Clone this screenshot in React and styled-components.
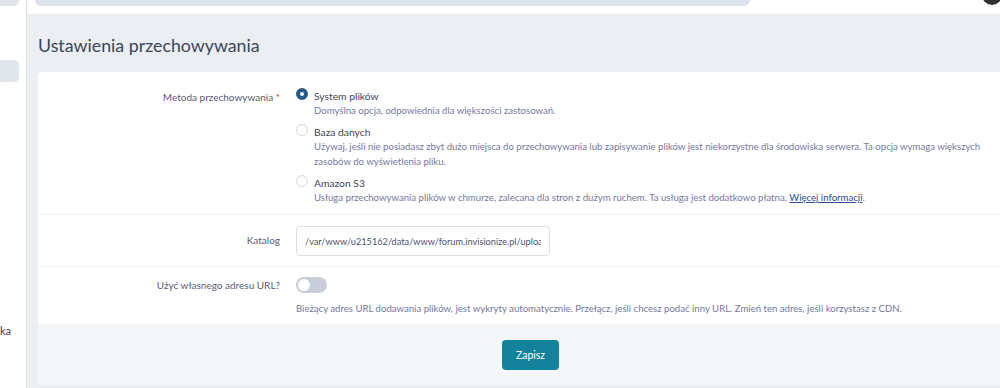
import React from 'react';
import styled, { createGlobalStyle } from 'styled-components';

const GlobalStyle = createGlobalStyle`
  html, body {
    margin: 0;
    padding: 0;
    overflow: hidden;
    background: #ebeef3;
  }
  body {
    font-family: Lato, "Open Sans", sans-serif;
  }
  * { box-sizing: border-box; }
`;

const Page = styled.div`
  display: grid;
  grid-template-columns: 27px 1fr;
  width: 1000px;
  height: 388px;
  overflow: hidden;
`;

const Sidebar = styled.aside`
  display: flex;
  flex-direction: column;
  background: #fff;
  border-right: 1px solid #dfe3e9;
`;

const SideBlock = styled.div`
  width: 19px;
  height: ${(p) => p.$h}px;
  margin-top: ${(p) => p.$top}px;
  background: #e1e5ec;
  border-radius: ${(p) => (p.$first ? '0 0 5px 0' : '0 5px 5px 0')};
`;

const SideText = styled.span`
  margin-top: auto;
  margin-bottom: 51px;
  font-size: 11px;
  color: #3f4152;
`;

const Main = styled.main`
  display: flex;
  flex-direction: column;
  min-width: 0;
`;

const Header = styled.header`
  display: flex;
  justify-content: space-between;
  align-items: flex-start;
  height: 14px;
  padding-left: 8px;
  background: #fff;
`;

const Search = styled.div`
  width: 715px;
  height: 6px;
  background: #dde3eb;
  border-radius: 0 0 6px 6px;
`;

const Avatar = styled.div`
  width: 20px;
  height: 20px;
  margin-top: -15px;
  margin-right: -2px;
  border-radius: 50%;
  background: #2f3133;
`;

const Content = styled.div`
  padding: 0 0 0 11px;
`;

const Title = styled.h1`
  margin: 19px 0 15px;
  font-size: 17.8px;
  line-height: 24px;
  font-weight: 400;
  color: #3a4659;
`;

const Card = styled.section`
  width: 985px;
  background: #fff;
  border-radius: 4px 4px 0 0;
`;

const Row = styled.div`
  display: grid;
  grid-template-columns: 242px 1fr;
  column-gap: 16px;
  padding: ${(p) => p.$pad};
  padding-right: 20px;
  border-top: ${(p) => (p.$first ? 'none' : '1px solid #eef0f4')};
`;

const Label = styled.label`
  text-align: right;
  font-size: 10px;
  line-height: 15px;
  color: #585d78;
  padding-top: ${(p) => p.$top || 0}px;
`;

const Req = styled.span`
  color: #d9302c;
`;

const Options = styled.div`
  display: flex;
  flex-direction: column;
  gap: 7px;
`;

const Option = styled.div`
  display: grid;
  grid-template-columns: 12px 1fr;
  column-gap: 6px;
`;

const Radio = styled.span`
  width: 12px;
  height: 12px;
  margin-top: -1px;
  border-radius: 50%;
  background: #fff;
  border: ${(p) => (p.$checked ? '4px solid #2b5886' : '1px solid #d6dae3')};
  box-shadow: ${(p) => (p.$checked ? 'none' : 'inset 0 1px 1px rgba(0,0,0,0.05)')};
`;

const OptionTitle = styled.div`
  font-size: 10.3px;
  line-height: 14px;
  color: #3f4457;
`;

const Desc = styled.div`
  font-size: 9.6px;
  line-height: 15px;
  color: #7479a0;
  margin-top: ${(p) => p.$top || 0}px;
`;

const Link = styled.a`
  color: #2a4b8d;
  text-decoration: underline;
`;

const Input = styled.input`
  display: block;
  width: 254px;
  height: 30px;
  padding: 0 8px;
  border: 1px solid #d9dde5;
  border-radius: 4px;
  font-family: inherit;
  font-size: 9.2px;
  color: #4d5370;
  background: #fff;
  outline: none;
`;

const Toggle = styled.span`
  display: flex;
  align-items: center;
  width: 31px;
  height: 16px;
  padding: 0 2px;
  border-radius: 8px;
  background: #c8cdd9;
`;

const Knob = styled.span`
  width: 12px;
  height: 12px;
  border-radius: 50%;
  background: #fff;
`;

const Footer = styled.div`
  display: flex;
  justify-content: center;
  padding: 16px 0 15px;
  background: #f5f6f8;
`;

const Button = styled.button`
  height: 30px;
  padding: 0 14px;
  border: none;
  border-radius: 4px;
  background: #12839a;
  color: #fff;
  font-family: inherit;
  font-size: 10.5px;
`;

const options = [
  {
    title: 'System plików',
    desc: 'Domyślna opcja, odpowiednia dla większości zastosowań.',
    checked: true,
  },
  {
    title: 'Baza danych',
    desc: 'Używaj, jeśli nie posiadasz zbyt dużo miejsca do przechowywania lub zapisywanie plików jest niekorzystne dla środowiska serwera. Ta opcja wymaga większych zasobów do wyświetlenia pliku.',
  },
  {
    title: 'Amazon S3',
    desc: 'Usługa przechowywania plików w chmurze, zalecana dla stron z dużym ruchem. Ta usługa jest dodatkowo płatna. ',
    link: 'Więcej informacji',
  },
];

const App = () => {
  return (
    <>
      <GlobalStyle />
      <Page>
        <Sidebar>
          <SideBlock $h={6} $top={0} $first />
          <SideBlock $h={22} $top={54} />
          <SideText>ka</SideText>
        </Sidebar>
        <Main>
          <Header>
            <Search />
            <Avatar />
          </Header>
          <Content>
            <Title>Ustawienia przechowywania</Title>
            <Card>
              <Row $first $pad="17px 0 9px">
                <Label $top={1}>
                  Metoda przechowywania <Req>*</Req>
                </Label>
                <Options>
                  {options.map((o) => (
                    <Option key={o.title}>
                      <Radio $checked={o.checked} />
                      <div>
                        <OptionTitle>{o.title}</OptionTitle>
                        <Desc>
                          {o.desc}
                          {o.link && (
                            <>
                              <Link>{o.link}</Link>.
                            </>
                          )}
                        </Desc>
                      </div>
                    </Option>
                  ))}
                </Options>
              </Row>
              <Row $pad="11px 0 10px">
                <Label $top={7}>Katalog</Label>
                <Input
                  readOnly
                  defaultValue="/var/www/u215162/data/www/forum.invisionize.pl/uploads"
                />
              </Row>
              <Row $pad="10px 0 8px">
                <Label $top={1}>Użyć własnego adresu URL?</Label>
                <div>
                  <Toggle>
                    <Knob />
                  </Toggle>
                  <Desc $top={8}>
                    Bieżący adres URL dodawania plików, jest wykryty automatycznie. Przełącz, jeśli chcesz podać inny URL. Zmień ten adres, jeśli korzystasz z CDN.
                  </Desc>
                </div>
              </Row>
              <Footer>
                <Button>Zapisz</Button>
              </Footer>
            </Card>
          </Content>
        </Main>
      </Page>
    </>
  );
};

export default App;
